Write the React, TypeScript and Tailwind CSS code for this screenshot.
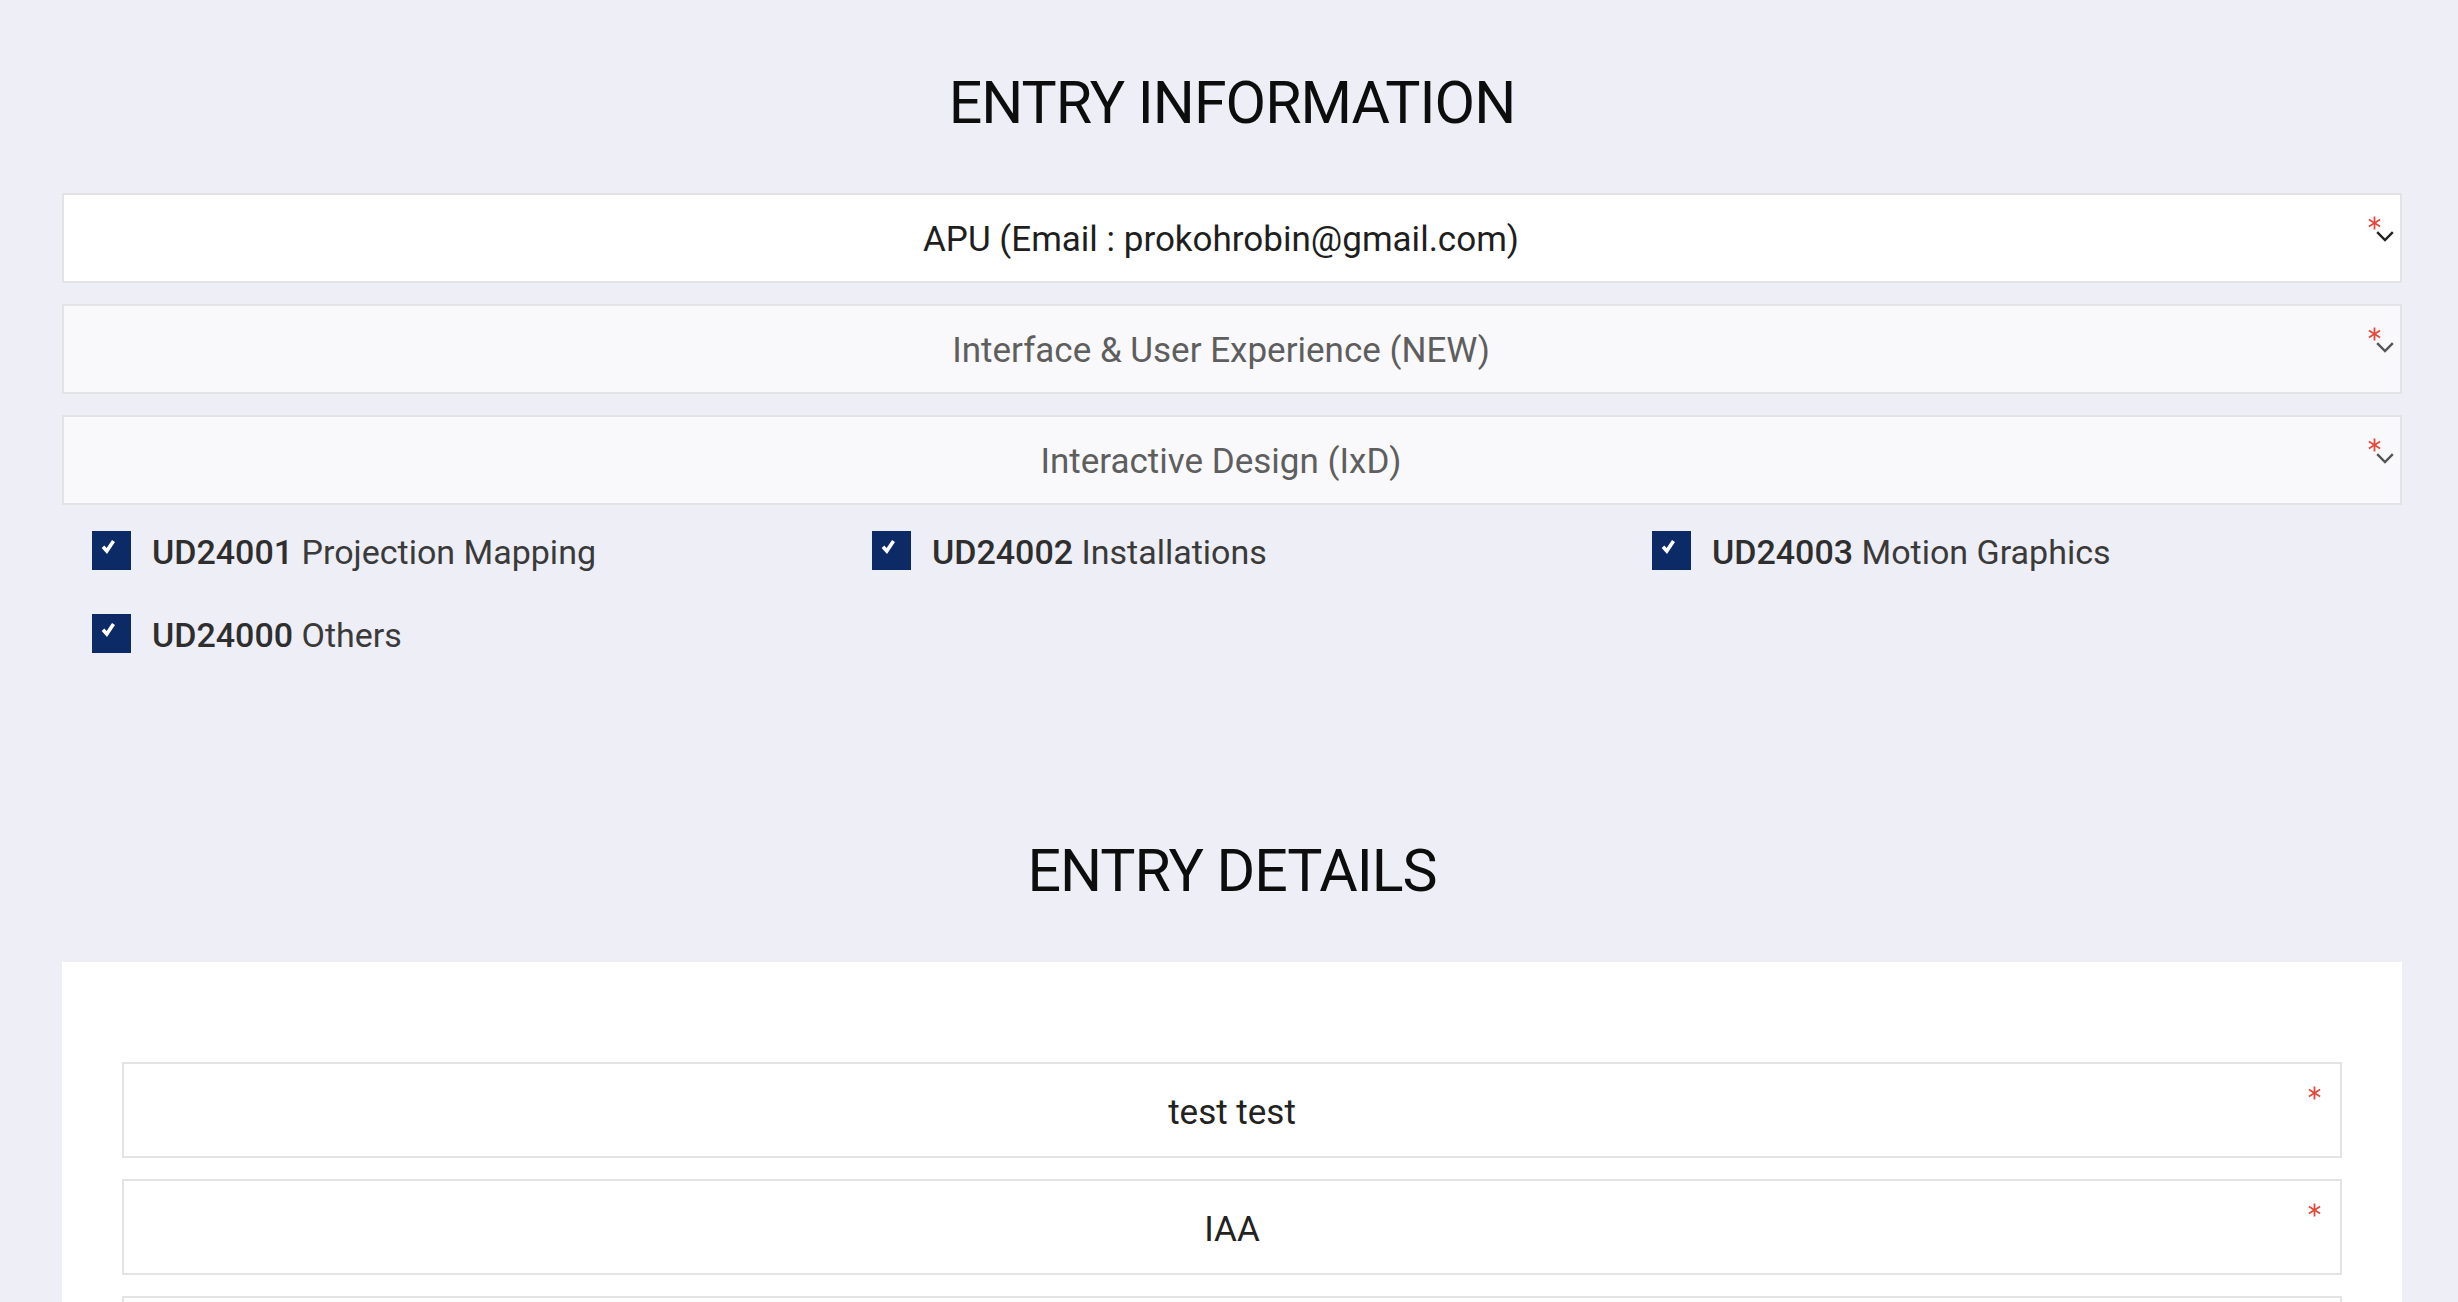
import React from "react";

function Asterisk() {
  return (
    <svg width="13" height="14" viewBox="0 0 13 14" aria-hidden="true">
      <g stroke="#e5483b" strokeWidth="1.8">
        <line x1="6.5" y1="0.5" x2="6.5" y2="13.5" />
        <line x1="0.9" y1="3.6" x2="12.1" y2="10.4" />
        <line x1="0.9" y1="10.4" x2="12.1" y2="3.6" />
      </g>
    </svg>
  );
}

function Chevron({ color }: { color: string }) {
  return (
    <svg width="18" height="11" viewBox="0 0 18 11" aria-hidden="true">
      <polyline points="1.2,1.2 9,9 16.8,1.2" fill="none" stroke={color} strokeWidth="2.4" />
    </svg>
  );
}

function Select({ text, active }: { text: string; active?: boolean }) {
  return (
    <div
      className={
        active
          ? "relative flex h-[90px] items-center justify-center border-2 border-[#e3e3e5] bg-white pt-[4px] pr-[22px] text-[35px] text-[#1e1e1e]"
          : "relative flex h-[90px] items-center justify-center border-2 border-[#e3e3e5] bg-[#f9f9fb] pt-[4px] pr-[22px] text-[35px] text-[#5e5e5e]"
      }
    >
      <span>{text}</span>
      <div className="absolute right-[19px] top-[21px]">
        <Asterisk />
      </div>
      <div className="absolute right-[6px] top-[36px]">
        <Chevron color={active ? "#222222" : "#555555"} />
      </div>
    </div>
  );
}

function Check({ code, label }: { code: string; label: string }) {
  return (
    <div className="flex h-[40px] items-center pl-[30px]">
      <div className="flex h-[39px] w-[39px] shrink-0 bg-[#0c2a66]">
        <svg width="39" height="39" viewBox="0 0 39 39" aria-hidden="true">
          <path d="M11 15.8 L14.8 20 L21.5 10" fill="none" stroke="#ffffff" strokeWidth="3.6" />
        </svg>
      </div>
      <span className="ml-[21px] mt-[5px] text-[34px] text-[#3a3a3a]">
        <span className="font-medium text-[#2e2e2e]">{code}</span> {label}
      </span>
    </div>
  );
}

function Field({ text }: { text: string }) {
  return (
    <div className="relative flex h-[96px] items-center justify-center border-2 border-[#e3e3e5] bg-white pt-[6px] text-[35px] text-[#222]">
      <span>{text}</span>
      <div className="absolute right-[19px] top-[22px]">
        <Asterisk />
      </div>
    </div>
  );
}

export default function App() {
  return (
    <div className="min-h-screen bg-[#edeef6] pl-[62px] pr-[56px] pt-[73px] pb-[200px] font-['Roboto',sans-serif]">
      <h1 className="text-center text-[59px] font-normal leading-none tracking-[-1px] text-[#0d0d0d]">
        ENTRY INFORMATION
      </h1>
      <div className="mt-[61px] flex flex-col gap-[21px]">
        <Select text="APU (Email : prokohrobin@gmail.com)" active />
        <Select text="Interface & User Experience (NEW)" />
        <Select text="Interactive Design (IxD)" />
      </div>
      <div className="mt-[25px] grid grid-cols-3 gap-y-[43px]">
        <Check code="UD24001" label="Projection Mapping" />
        <Check code="UD24002" label="Installations" />
        <Check code="UD24003" label="Motion Graphics" />
        <Check code="UD24000" label="Others" />
      </div>
      <h2 className="mt-[188px] text-center text-[59px] font-normal leading-none tracking-[-1px] text-[#0d0d0d]">
        ENTRY DETAILS
      </h2>
      <div className="mt-[62px] flex flex-col gap-[21px] bg-white px-[60px] pt-[100px] pb-[100px]">
        <Field text="test test" />
        <Field text="IAA" />
        <Field text="" />
        <Field text="" />
      </div>
    </div>
  );
}
